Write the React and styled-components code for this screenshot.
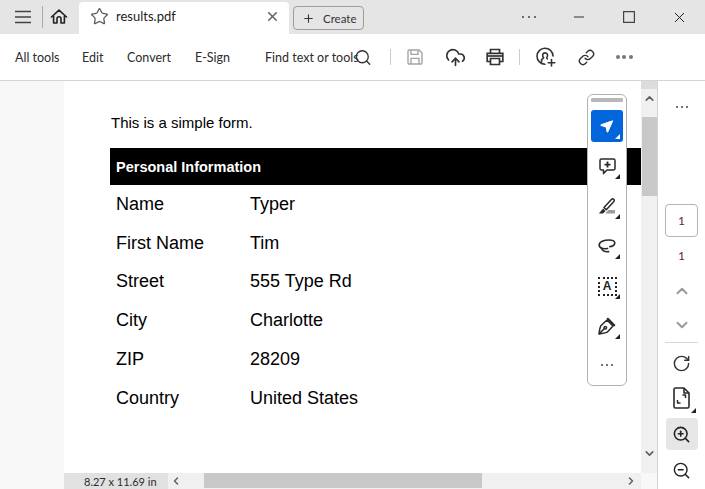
import React from "react"
import styled, { createGlobalStyle } from "styled-components"
import { CloudUpload, Link, Minus, Plus, RotateCw, Search, Star, X, ZoomIn, ZoomOut, ChevronUp, ChevronDown, ChevronLeft, ChevronRight, MessageSquarePlus, MousePointer2 } from "lucide-react"

const Global = createGlobalStyle`
  html, body { margin: 0; padding: 0; background: #fff; }
  body { font-family: "Lato", "Liberation Sans", sans-serif; color: #2c2c2c; overflow: hidden; }
`

const Shell = styled.div`
  width: 705px;
  height: 489px;
  display: flex;
  flex-direction: column;
  position: relative;
  overflow: hidden;
`

const TitleBar = styled.div`
  height: 34px;
  background: #e5e5e5;
  display: flex;
  align-items: flex-end;
  flex: none;
`

const NavGroup = styled.div`
  width: 79px;
  height: 34px;
  display: flex;
  align-items: center;
  padding-left: 15px;
  box-sizing: border-box;
  flex: none;
`

const NavDivider = styled.span`
  width: 1px;
  height: 22px;
  background: #a8a8a8;
  margin: 0 7px 0 11px;
`

const Tab = styled.div`
  width: 210px;
  height: 32px;
  background: #fff;
  border-radius: 4px 4px 0 0;
  display: flex;
  align-items: center;
  padding: 0 9px 4px 11px;
  box-sizing: border-box;
  font-size: 13px;
  color: #222;
  flex: none;
`

const TabName = styled.span`
  margin-left: 7px;
  flex: 1;
`

const CreateButton = styled.div`
  width: 71px;
  height: 24px;
  margin: 0 0 4px 4px;
  box-sizing: border-box;
  border: 1px solid #9c9c9c;
  border-radius: 4px;
  display: flex;
  align-items: center;
  padding-left: 8px;
  gap: 8px;
  font-size: 11.5px;
  color: #333;
  flex: none;
`

const WindowButtons = styled.div`
  margin-left: auto;
  height: 34px;
  display: flex;
  align-items: center;
  padding-right: 1px;
`

const WindowButton = styled.div`
  width: 50px;
  height: 34px;
  display: flex;
  align-items: center;
  justify-content: center;
  color: #222;
`

const Dots = styled.div`
  display: flex;
  gap: ${p => p.$gap || 4}px;
  span {
    width: ${p => p.$size || 2}px;
    height: ${p => p.$size || 2}px;
    border-radius: 50%;
    background: ${p => p.$color || "#444"};
  }
`

const ToolBar = styled.div`
  height: 47px;
  box-sizing: border-box;
  border-bottom: 1px solid #d4d4d4;
  display: flex;
  align-items: center;
  padding-left: 15px;
  font-size: 12.5px;
  color: #2c2c2c;
  flex: none;
`

const ToolLabel = styled.span`
  width: ${p => p.$w}px;
  flex: none;
  white-space: nowrap;
`

const ToolIcon = styled.div`
  width: 40px;
  height: 47px;
  display: flex;
  align-items: center;
  justify-content: center;
  flex: none;
  color: #333;
`

const ToolDivider = styled.span`
  width: 1px;
  height: 16px;
  background: #ccc;
  flex: none;
  margin: ${p => p.$margin};
`

const Main = styled.div`
  flex: 1;
  display: flex;
  min-height: 0;
`

const Gutter = styled.div`
  width: 64px;
  background: #f8f8f8;
  flex: none;
`

const Center = styled.div`
  width: 593px;
  flex: none;
  display: flex;
  flex-direction: column;
`

const CenterTop = styled.div`
  flex: 1;
  display: flex;
  min-height: 0;
`

const Page = styled.div`
  width: 577px;
  flex: none;
  box-sizing: border-box;
  padding: 33px 0 0 46px;
  background: #fff;
  font-family: "Liberation Sans", Arial, sans-serif;
  color: #000;
`

const Intro = styled.div`
  font-size: 15px;
  line-height: 18px;
  margin: 0 0 16px 1px;
`

const SectionHead = styled.div`
  height: 37px;
  background: #000;
  color: #fff;
  font-weight: 700;
  font-size: 14.5px;
  display: flex;
  align-items: center;
  padding-left: 6px;
`

const Rows = styled.div`
  padding: 0 0 0 6px;
`

const Row = styled.div`
  display: flex;
  height: 38.8px;
  align-items: center;
  font-size: 18px;
`

const RowName = styled.span`
  width: 134px;
`

const VScroll = styled.div`
  width: 16px;
  background: #f0f0f0;
  flex: none;
  display: flex;
  flex-direction: column;
  align-items: center;
  color: #606060;
`

const VStub = styled.div`
  width: 16px;
  height: 8px;
  background: #dcdcdc;
  flex: none;
`

const VArrow = styled.div`
  height: 15px;
  margin-top: ${p => p.$top || 0}px;
  display: flex;
  align-items: center;
  justify-content: center;
  flex: none;
`

const VThumb = styled.div`
  width: 15px;
  height: 79px;
  margin-top: 11px;
  background: #c8c8c8;
  flex: none;
`

const HScroll = styled.div`
  height: 16px;
  display: flex;
  background: #f0f0f0;
  flex: none;
  color: #606060;
  font-size: 11px;
`

const SizeLabel = styled.div`
  width: 104px;
  background: #e1e1e1;
  color: #2c2c2c;
  display: flex;
  align-items: center;
  padding-left: 20px;
  box-sizing: border-box;
  flex: none;
`

const HArrow = styled.div`
  width: 36px;
  display: flex;
  align-items: center;
  padding-left: 2px;
  box-sizing: border-box;
  flex: none;
`

const HThumb = styled.div`
  width: 278px;
  height: 15px;
  background: #c8c8c8;
  flex: none;
`

const HEnd = styled.div`
  width: 159px;
  display: flex;
  align-items: center;
  justify-content: flex-end;
  padding-right: 4px;
  box-sizing: border-box;
  flex: none;
`

const HCorner = styled.div`
  flex: 1;
  background: #f8f8f8;
`

const Rail = styled.div`
  flex: 1;
  border-left: 1px solid #d4d4d4;
  display: flex;
  flex-direction: column;
  align-items: center;
  padding-top: 25px;
  color: #333;
`

const PageBox = styled.div`
  width: 33px;
  height: 33px;
  margin-top: 96px;
  box-sizing: border-box;
  border: 1px solid #b4b4b4;
  border-radius: 4px;
  display: flex;
  align-items: center;
  justify-content: center;
  font-size: 12px;
  color: #5c2a45;
`

const PageTotal = styled.div`
  margin-top: 10px;
  height: 18px;
  line-height: 18px;
  font-size: 12px;
  color: #5c2a45;
`

const RailIcon = styled.div`
  width: 32px;
  height: 32px;
  margin-top: ${p => p.$top ?? 8}px;
  border-radius: 4px;
  background: ${p => (p.$active ? "#e6e6e6" : "transparent")};
  display: flex;
  align-items: center;
  justify-content: center;
  flex: none;
  position: relative;
  color: ${p => p.$color || "#333"};
`

const RailRule = styled.div`
  width: 33px;
  height: 1px;
  background: #d8d8d8;
  margin-top: 1px;
  flex: none;
`

const Corner = styled.span`
  position: absolute;
  right: ${p => p.$right ?? 3}px;
  bottom: ${p => p.$bottom ?? 3}px;
  width: 0;
  height: 0;
  border-style: solid;
  border-width: 0 0 5px 5px;
  border-color: transparent transparent ${p => p.$color || "#222"} transparent;
`

const FloatBar = styled.div`
  position: absolute;
  left: 587px;
  top: 94px;
  width: 40px;
  height: 292px;
  box-sizing: border-box;
  background: #fff;
  border: 1px solid #b0b0b0;
  border-radius: 6px;
  display: flex;
  flex-direction: column;
  align-items: center;
  padding-top: 3px;
`

const Grip = styled.div`
  width: 32px;
  height: 4px;
  background: #b8b8b8;
  border-radius: 1px;
  flex: none;
`

const FloatTool = styled.div`
  width: 32px;
  height: 32px;
  margin-top: ${p => p.$top ?? 8}px;
  border-radius: 3px;
  background: ${p => (p.$active ? "#0265dc" : "transparent")};
  color: ${p => (p.$active ? "#fff" : "#2a2a2a")};
  display: flex;
  align-items: center;
  justify-content: center;
  position: relative;
  flex: none;
`

const TEXT_BOX_LETTER = styled.span`
  font-family: "Liberation Sans", Arial, sans-serif;
  font-size: 12px;
  font-weight: 700;
  line-height: 1;
`

const TextBox = styled.div`
  width: 15px;
  height: 15px;
  border: 2px dotted #222;
  display: flex;
  align-items: center;
  justify-content: center;
  color: #222;
`

const rows = [
  ["Name", "Typer"],
  ["First Name", "Tim"],
  ["Street", "555 Type Rd"],
  ["City", "Charlotte"],
  ["ZIP", "28209"],
  ["Country", "United States"],
]

const Menu = () => (
  <svg width="16" height="14" viewBox="0 0 16 14" stroke="#444" strokeWidth="1.6">
    <path d="M0 1.5h16M0 7h16M0 12.5h16" />
  </svg>
)

const Home = () => (
  <svg width="18" height="18" viewBox="0 0 18 18" fill="none" stroke="#222" strokeWidth="1.6" strokeLinejoin="round" strokeLinecap="round">
    <path d="M1.5 9 9 2.2 16.5 9M3.6 8v7h3.4v-4.2a2 2 0 0 1 4 0V15h3.4V8" />
  </svg>
)

const Save = () => (
  <svg width="16" height="16" viewBox="0 0 16 16" fill="none" stroke="#a4a4a4" strokeWidth="1.4">
    <path d="M1 2.2A1.2 1.2 0 0 1 2.2 1H12l3 3v9.8a1.2 1.2 0 0 1-1.2 1.2H2.2A1.2 1.2 0 0 1 1 13.8z" />
    <path d="M4 1v4.4h7V1M4 15V9.4h8V15" />
  </svg>
)

const Printer = () => (
  <svg width="18" height="18" viewBox="0 0 18 18" fill="none" stroke="#333" strokeWidth="1.7">
    <path d="M4.5 5V1.5h9V5M4.5 13.5H1.2V5.4h15.6v8.1h-3.3" />
    <path d="M4.5 10.5h9v6h-9z" />
    <path d="M1.2 8h15.6" />
  </svg>
)

const Account = () => (
  <svg width="20" height="20" viewBox="0 0 20 20" fill="none" stroke="#333" strokeWidth="1.6" strokeLinecap="round">
    <path d="M9 17.2A8 8 0 1 1 17 9" />
    <path d="M5.6 15V12.5c1.6-.6 2-1.2 2-2-1.4-1-1.5-4.6 1.5-4.6s2.9 3.4 1.6 4.6c0 .7.2 1 .6 1.3" />
    <path d="M15.5 12.5v6.5M12.2 15.8h6.6" />
  </svg>
)

const Comment = () => (
  <svg width="17" height="17" viewBox="0 0 17 17" fill="none" stroke="#2a2a2a" strokeWidth="1.5" strokeLinejoin="round">
    <path d="M2.4 1h12.2A1.4 1.4 0 0 1 16 2.4v8.2a1.4 1.4 0 0 1-1.4 1.4H8l-3.5 3.6V12H2.4A1.4 1.4 0 0 1 1 10.6V2.4A1.4 1.4 0 0 1 2.4 1z" />
    <path d="M8.5 3.6v6M5.5 6.6h6" strokeWidth="1.8" />
  </svg>
)

const Highlight = () => (
  <svg width="18" height="18" viewBox="0 0 18 18" fill="none">
    <path d="m6 10.5 7.6-8.2a1.6 1.6 0 0 1 2.3 2.2l-7.6 8.2z" stroke="#2a2a2a" strokeWidth="1.5" strokeLinejoin="round" />
    <path d="M8 15.5 10.5 13H17v3.5H7.5z" fill="#9c9c9c" />
    <path d="M5.2 11.6 7.6 14 5 16.4H.8z" fill="#2a2a2a" />
  </svg>
)

const Lasso = () => (
  <svg width="18" height="14" viewBox="0 0 18 14" fill="none" stroke="#2a2a2a" strokeWidth="1.6" strokeLinecap="round">
    <path d="M9.5 9.4C5.6 10.4 1.2 9.4 1.2 6 1.2 2.8 6 1 11 1c3.6 0 5.8 1 5.8 3 0 2.4-3 3.6-5 3.6" />
    <path d="M3.6 9.6C4.4 11.8 7 13 10.6 12.6" />
  </svg>
)

const Pen = () => (
  <svg width="18" height="18" viewBox="0 0 18 18" fill="none" stroke="#2a2a2a" strokeWidth="1.5" strokeLinejoin="round" strokeLinecap="round">
    <path d="M1 17c.3-2.600.7-6 1.800-8.200L9 3l6 6-5.800 6.200C7 16.300 3.600 16.700 1 17z" />
    <path d="m1.400 16.600 4.800-4.800" />
    <circle cx="7.300" cy="10.700" r="1.300" />
    <path d="m9.800 1.800 6.400 6.400" strokeWidth="2.200" />
  </svg>
)

const DocFit = () => (
  <svg width="18" height="22" viewBox="0 0 18 22" fill="none" stroke="#2a2a2a" strokeWidth="1.6" strokeLinejoin="round">
    <path d="M2.500 1H11l5 5v13.500a1.500 1.500 0 0 1-1.500 1.500h-12A1.500 1.500 0 0 1 1 19.500v-17A1.500 1.500 0 0 1 2.500 1z" />
    <path d="M11 1v5h5" />
    <path d="M9.500 8h3v3M7.500 16h-3v-3" strokeWidth="1.500" />
  </svg>
)

export default function App() {
  return (
    <Shell>
      <Global />
      <TitleBar>
        <NavGroup>
          <Menu />
          <NavDivider />
          <Home />
        </NavGroup>
        <Tab>
          <Star size={19} strokeWidth={1.6} color="#5a5a5a" />
          <TabName>results.pdf</TabName>
          <X size={15} strokeWidth={2.6} color="#666" />
        </Tab>
        <CreateButton>
          <Plus size={13} strokeWidth={2} color="#333" />
          Create
        </CreateButton>
        <WindowButtons>
          <WindowButton>
            <Dots $gap={4} $size={2}><span /><span /><span /></Dots>
          </WindowButton>
          <WindowButton>
            <Minus size={16} strokeWidth={1.4} />
          </WindowButton>
          <WindowButton>
            <svg width="12" height="12" viewBox="0 0 12 12" fill="none" stroke="#444" strokeWidth="1.2"><path d="M.6.6h10.800v10.800H.6z" /></svg>
          </WindowButton>
          <WindowButton>
            <X size={17} strokeWidth={1.4} />
          </WindowButton>
        </WindowButtons>
      </TitleBar>

      <ToolBar>
        <ToolLabel $w={67}>All tools</ToolLabel>
        <ToolLabel $w={45}>Edit</ToolLabel>
        <ToolLabel $w={68}>Convert</ToolLabel>
        <ToolLabel $w={70}>E-Sign</ToolLabel>
        <ToolLabel $w={89}>Find text or tools</ToolLabel>
        <ToolIcon style={{ width: 18 }}><Search size={19} strokeWidth={1.8} /></ToolIcon>
        <ToolDivider $margin="0 4px 0 18px" />
        <ToolIcon><Save /></ToolIcon>
        <ToolIcon><CloudUpload size={21} strokeWidth={1.9} /></ToolIcon>
        <ToolIcon><Printer /></ToolIcon>
        <ToolDivider $margin="0 3px 0 4px" />
        <ToolIcon style={{ marginLeft: 3 }}><Account /></ToolIcon>
        <ToolIcon><Link size={17} strokeWidth={2} /></ToolIcon>
        <ToolIcon style={{ marginLeft: -2 }}><Dots $gap={2.500} $size={4} $color="#777"><span /><span /><span /></Dots></ToolIcon>
      </ToolBar>

      <Main>
        <Gutter />
        <Center>
          <CenterTop>
            <Page>
              <Intro>This is a simple form.</Intro>
              <SectionHead>Personal Information</SectionHead>
              <Rows>
                {rows.map(([name, value]) => (
                  <Row key={name}>
                    <RowName>{name}</RowName>
                    <span>{value}</span>
                  </Row>
                ))}
              </Rows>
            </Page>
            <VScroll>
              <VStub />
              <VArrow $top={2}><ChevronUp size={13} strokeWidth={3} /></VArrow>
              <VThumb />
              <VArrow $top={250}><ChevronDown size={13} strokeWidth={3} /></VArrow>
            </VScroll>
          </CenterTop>
          <HScroll>
            <SizeLabel>8.27 x 11.69 in</SizeLabel>
            <HArrow><ChevronLeft size={12} strokeWidth={3} /></HArrow>
            <HThumb />
            <HEnd><ChevronRight size={12} strokeWidth={3} /></HEnd>
            <HCorner />
          </HScroll>
        </Center>
        <Rail>
          <Dots $gap={3} $size={2}><span /><span /><span /></Dots>
          <PageBox>1</PageBox>
          <PageTotal>1</PageTotal>
          <RailIcon $top={10} $color="#9a9a9a"><ChevronUp size={18} strokeWidth={2.600} /></RailIcon>
          <RailIcon $top={2} $color="#9a9a9a"><ChevronDown size={18} strokeWidth={2.600} /></RailIcon>
          <RailRule />
          <RailIcon $top={4}><RotateCw size={19} strokeWidth={1.800} style={{ transform: "scaleY(1)" }} /></RailIcon>
          <RailIcon $top={3}><DocFit /><Corner $right={2} $bottom={1} /></RailIcon>
          <RailIcon $top={4} $active><ZoomIn size={19} strokeWidth={2} color="#222" /></RailIcon>
          <RailIcon $top={4}><ZoomOut size={19} strokeWidth={1.800} color="#222" /></RailIcon>
        </Rail>
      </Main>

      <FloatBar>
        <Grip />
        <FloatTool $active>
          <MousePointer2 size={16} fill="#fff" strokeWidth={1.500} style={{ transform: "scaleX(-1) rotate(-2deg)" }} />
          <Corner $color="#fff" />
        </FloatTool>
        <FloatTool><Comment /><Corner /></FloatTool>
        <FloatTool><Highlight /><Corner /></FloatTool>
        <FloatTool><Lasso /><Corner /></FloatTool>
        <FloatTool><TextBox><TEXT_BOX_LETTER>A</TEXT_BOX_LETTER></TextBox><Corner /></FloatTool>
        <FloatTool><Pen /><Corner /></FloatTool>
        <FloatTool $top={7}><Dots $gap={3} $size={2}><span /><span /><span /></Dots></FloatTool>
      </FloatBar>
    </Shell>
  )
}
